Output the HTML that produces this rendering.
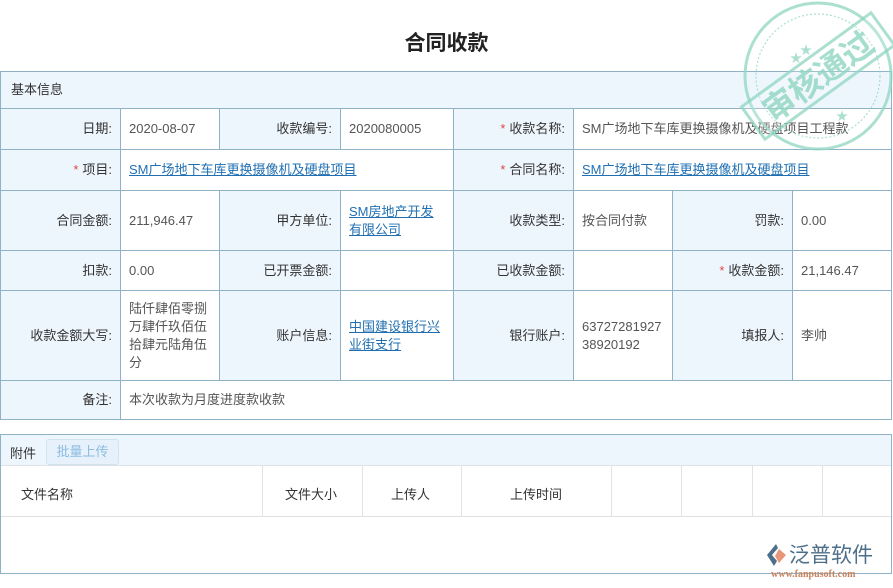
<!DOCTYPE html>
<html><head><meta charset="utf-8"><style>
*{margin:0;padding:0;box-sizing:border-box}
body{width:893px;height:588px;background:#fff;font-family:"Liberation Sans","Noto Sans CJK SC",sans-serif;font-size:13px;color:#333;position:relative;overflow:hidden}
.c{position:absolute;border:1px solid #8fb2c6;display:flex;align-items:center;padding:0 8px;line-height:18px}
.l{background:#eef6fd;justify-content:flex-end;text-align:right}
.v{background:#fff;color:#555}
.a{color:#1f6fb2;text-decoration:underline}
.r{color:#e04545;margin-right:4px}
.h{position:absolute;color:#333}
</style></head><body>
<div style="position:absolute;left:0;top:27px;width:893px;text-align:center;font-size:21px;font-weight:bold;color:#222">合同收款</div>
<div class="c" style="left:0;top:71px;width:892px;height:38px;background:#eef6fd;padding-left:10px">基本信息</div>

<div class="c l" style="left:0;top:108px;width:121px;height:42px">日期:</div>
<div class="c v" style="left:120px;top:108px;width:100px;height:42px">2020-08-07</div>
<div class="c l" style="left:219px;top:108px;width:122px;height:42px">收款编号:</div>
<div class="c v" style="left:340px;top:108px;width:114px;height:42px">2020080005</div>
<div class="c l" style="left:453px;top:108px;width:121px;height:42px"><span class="r">*</span>收款名称:</div>
<div class="c v" style="left:573px;top:108px;width:319px;height:42px">SM广场地下车库更换摄像机及硬盘项目工程款</div>

<div class="c l" style="left:0;top:149px;width:121px;height:42px"><span class="r">*</span>项目:</div>
<div class="c v" style="left:120px;top:149px;width:334px;height:42px"><span class="a">SM广场地下车库更换摄像机及硬盘项目</span></div>
<div class="c l" style="left:453px;top:149px;width:121px;height:42px"><span class="r">*</span>合同名称:</div>
<div class="c v" style="left:573px;top:149px;width:319px;height:42px"><span class="a">SM广场地下车库更换摄像机及硬盘项目</span></div>

<div class="c l" style="left:0;top:190px;width:121px;height:61px">合同金额:</div>
<div class="c v" style="left:120px;top:190px;width:100px;height:61px">211,946.47</div>
<div class="c l" style="left:219px;top:190px;width:122px;height:61px">甲方单位:</div>
<div class="c v" style="left:340px;top:190px;width:114px;height:61px"><span class="a">SM房地产开发有限公司</span></div>
<div class="c l" style="left:453px;top:190px;width:121px;height:61px">收款类型:</div>
<div class="c v" style="left:573px;top:190px;width:100px;height:61px">按合同付款</div>
<div class="c l" style="left:672px;top:190px;width:121px;height:61px">罚款:</div>
<div class="c v" style="left:792px;top:190px;width:100px;height:61px">0.00</div>

<div class="c l" style="left:0;top:250px;width:121px;height:41px">扣款:</div>
<div class="c v" style="left:120px;top:250px;width:100px;height:41px">0.00</div>
<div class="c l" style="left:219px;top:250px;width:122px;height:41px">已开票金额:</div>
<div class="c v" style="left:340px;top:250px;width:114px;height:41px"></div>
<div class="c l" style="left:453px;top:250px;width:121px;height:41px">已收款金额:</div>
<div class="c v" style="left:573px;top:250px;width:100px;height:41px"></div>
<div class="c l" style="left:672px;top:250px;width:121px;height:41px"><span class="r">*</span>收款金额:</div>
<div class="c v" style="left:792px;top:250px;width:100px;height:41px">21,146.47</div>

<div class="c l" style="left:0;top:290px;width:121px;height:91px">收款金额大写:</div>
<div class="c v" style="left:120px;top:290px;width:100px;height:91px">陆仟肆佰零捌万肆仟玖佰伍拾肆元陆角伍分</div>
<div class="c l" style="left:219px;top:290px;width:122px;height:91px">账户信息:</div>
<div class="c v" style="left:340px;top:290px;width:114px;height:91px"><span class="a">中国建设银行兴业街支行</span></div>
<div class="c l" style="left:453px;top:290px;width:121px;height:91px">银行账户:</div>
<div class="c v" style="left:573px;top:290px;width:100px;height:91px;word-break:break-all">6372728192738920192</div>
<div class="c l" style="left:672px;top:290px;width:121px;height:91px">填报人:</div>
<div class="c v" style="left:792px;top:290px;width:100px;height:91px">李帅</div>

<div class="c l" style="left:0;top:380px;width:121px;height:40px">备注:</div>
<div class="c v" style="left:120px;top:380px;width:772px;height:40px">本次收款为月度进度款收款</div>

<!-- stamp -->
<svg style="position:absolute;left:738px;top:0px" width="160" height="155" viewBox="0 0 160 155">
<g fill="none" stroke="#8fd6c1" stroke-width="3" opacity="0.75">
<circle cx="80" cy="76" r="73"/><circle cx="80" cy="76" r="62" stroke-width="1.2" stroke-dasharray="2 2"/>
</g>
<g fill="#8fd6c1" opacity="0.75" font-size="12"><text x="52" y="62">★</text><text x="62" y="54">★</text><text x="98" y="120">★</text></g>
<g transform="rotate(-36 80 76)"><rect x="0" y="56" width="160" height="40" fill="#fff" fill-opacity="0.25" stroke="#8fd6c1" stroke-width="3" opacity="0.75"/>
<text x="80" y="88" text-anchor="middle" font-family="Noto Sans CJK SC,sans-serif" font-weight="bold" font-size="32" fill="#8fd6c1" opacity="0.8">审核通过</text></g>
</svg>

<!-- attachments -->
<div style="position:absolute;left:0;top:434px;width:892px;height:140px;border:1px solid #8fb2c6"></div>
<div style="position:absolute;left:1px;top:435px;width:890px;height:31px;background:#eef6fd;border-bottom:1px solid #dde3e8"></div>
<div class="h" style="left:10px;top:443px">附件</div>
<div style="position:absolute;left:46px;top:439px;width:73px;height:26px;border:1px solid #d2e3f0;border-radius:3px;background:#e6f1fb;color:#8bbde0;text-align:center;line-height:24px">批量上传</div>
<div style="position:absolute;left:1px;top:516px;width:890px;height:1px;background:#e0e0e0"></div>
<div style="position:absolute;left:262px;top:466px;width:1px;height:50px;background:#e3e3e3"></div>
<div style="position:absolute;left:362px;top:466px;width:1px;height:50px;background:#e3e3e3"></div>
<div style="position:absolute;left:461px;top:466px;width:1px;height:50px;background:#e3e3e3"></div>
<div style="position:absolute;left:611px;top:466px;width:1px;height:50px;background:#e3e3e3"></div>
<div style="position:absolute;left:681px;top:466px;width:1px;height:50px;background:#e3e3e3"></div>
<div style="position:absolute;left:752px;top:466px;width:1px;height:50px;background:#e3e3e3"></div>
<div style="position:absolute;left:822px;top:466px;width:1px;height:50px;background:#e3e3e3"></div>
<div class="h" style="left:21px;top:484px">文件名称</div>
<div class="h" style="left:285px;top:484px">文件大小</div>
<div class="h" style="left:391px;top:484px">上传人</div>
<div class="h" style="left:510px;top:484px">上传时间</div>

<!-- logo -->
<svg style="position:absolute;left:764px;top:543px" width="24" height="24" viewBox="0 0 24 24">
<path d="M12 1 L3 12 L10 23 L13 18 L8 12 L14 5 Z" fill="#4e6f8a"/>
<path d="M15 6 L22 12 L15 20 L11 13 Z" fill="#e8967a"/>
</svg>
<div style="position:absolute;left:789px;top:541px;font-size:21px;color:#4e6f8a;letter-spacing:0px;font-family:'Noto Sans CJK SC',sans-serif;line-height:26px">泛普软件</div>
<div style="position:absolute;left:771px;top:569px;font-size:10px;color:#c8845e;font-family:'Liberation Serif',serif;font-weight:bold">www.fanpusoft.com</div>
</body></html>
